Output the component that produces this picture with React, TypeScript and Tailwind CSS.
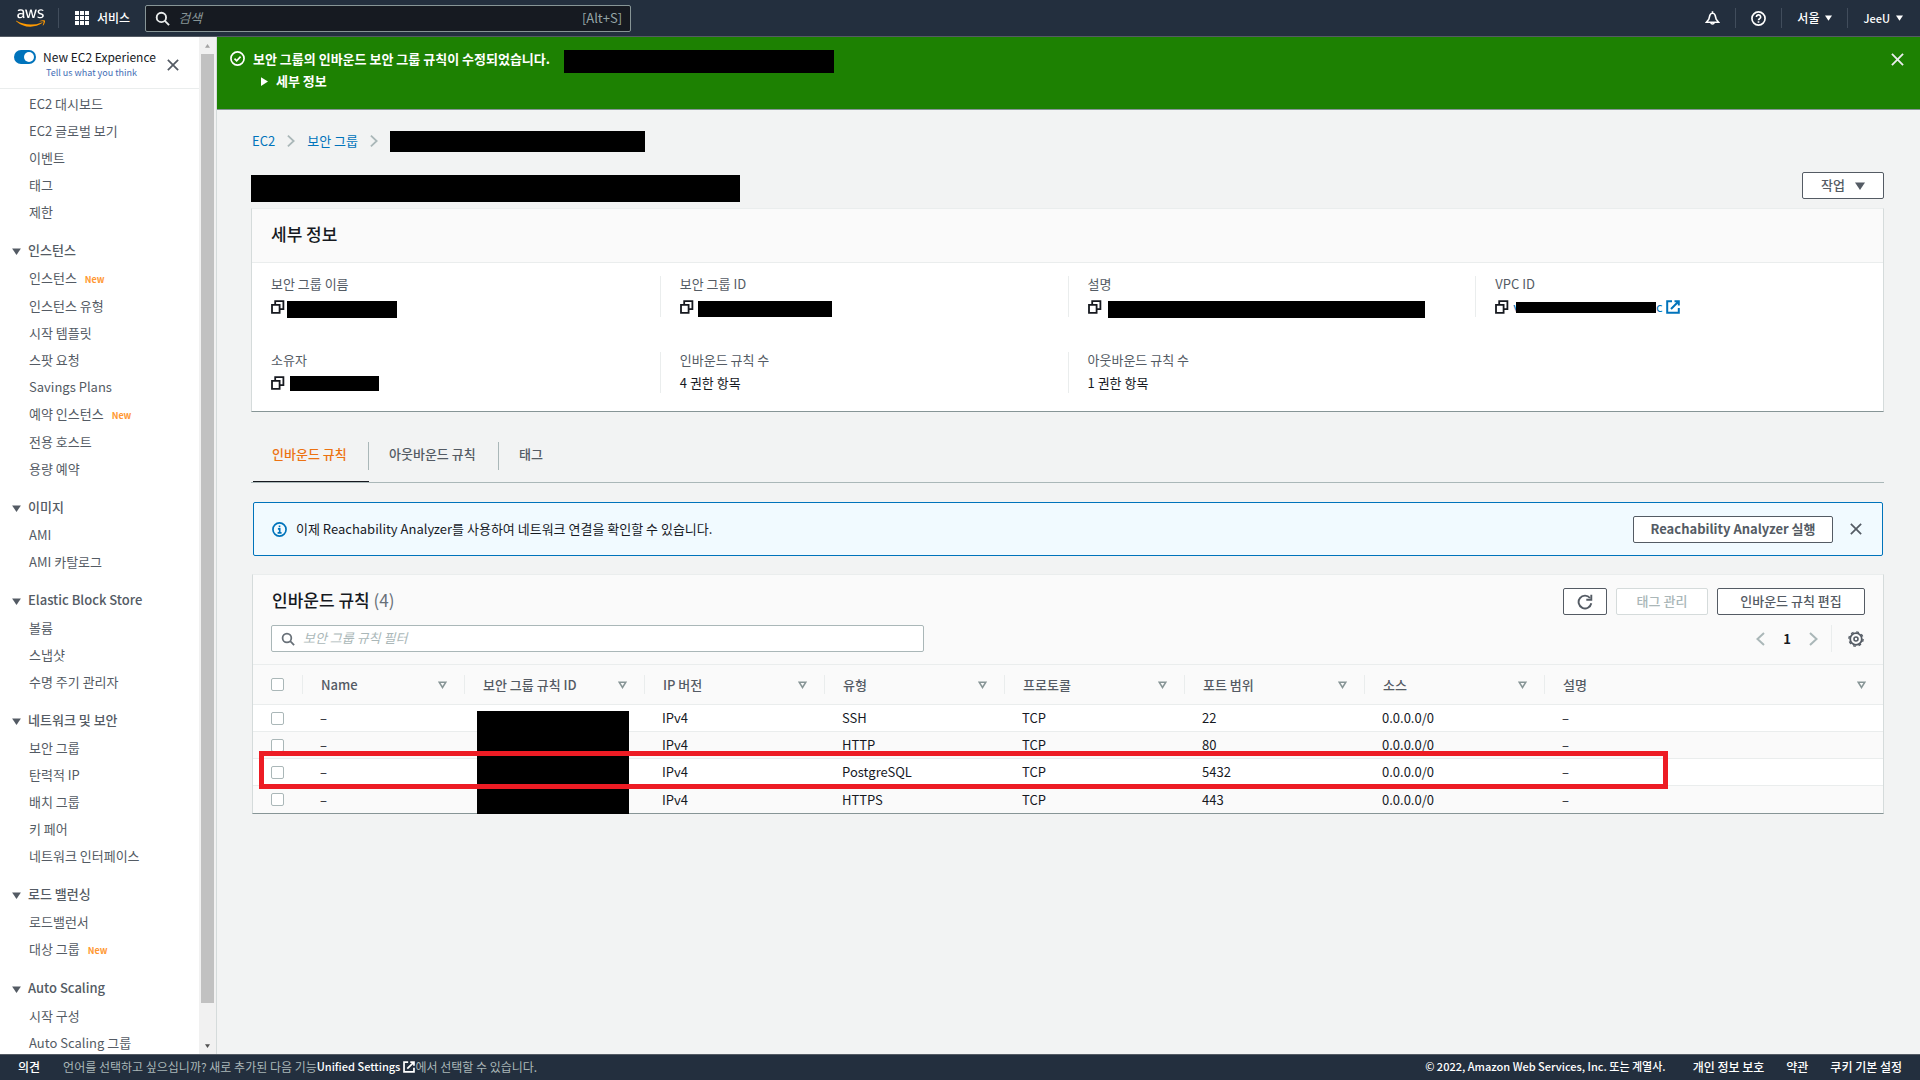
import React from 'react';
import { FaAws } from 'react-icons/fa';

interface NavItem {
  label: string;
  isNew?: boolean;
}

interface NavSection {
  title?: string;
  items: NavItem[];
}

const sections: NavSection[] = [
  {
    items: [
      { label: 'EC2 대시보드' },
      { label: 'EC2 글로벌 보기' },
      { label: '이벤트' },
      { label: '태그' },
      { label: '제한' },
    ],
  },
  {
    title: '인스턴스',
    items: [
      { label: '인스턴스', isNew: true },
      { label: '인스턴스 유형' },
      { label: '시작 템플릿' },
      { label: '스팟 요청' },
      { label: 'Savings Plans' },
      { label: '예약 인스턴스', isNew: true },
      { label: '전용 호스트' },
      { label: '용량 예약' },
    ],
  },
  { title: '이미지', items: [{ label: 'AMI' }, { label: 'AMI 카탈로그' }] },
  {
    title: 'Elastic Block Store',
    items: [{ label: '볼륨' }, { label: '스냅샷' }, { label: '수명 주기 관리자' }],
  },
  {
    title: '네트워크 및 보안',
    items: [
      { label: '보안 그룹' },
      { label: '탄력적 IP' },
      { label: '배치 그룹' },
      { label: '키 페어' },
      { label: '네트워크 인터페이스' },
    ],
  },
  {
    title: '로드 밸런싱',
    items: [{ label: '로드밸런서' }, { label: '대상 그룹', isNew: true }],
  },
  {
    title: 'Auto Scaling',
    items: [{ label: '시작 구성' }, { label: 'Auto Scaling 그룹' }],
  },
];

const columns = ['Name', '보안 그룹 규칙 ID', 'IP 버전', '유형', '프로토콜', '포트 범위', '소스', '설명'];

const rules = [
  { type: 'SSH', port: '22' },
  { type: 'HTTP', port: '80' },
  { type: 'PostgreSQL', port: '5432' },
  { type: 'HTTPS', port: '443' },
];

function Caret({ className }: { className?: string }) {
  return (
    <svg viewBox="0 0 10 8" className={className} fill="currentColor" aria-hidden="true">
      <path d="M0 0.5h10L5 8z" />
    </svg>
  );
}

function CloseIcon({ className }: { className?: string }) {
  return (
    <svg viewBox="0 0 14 14" className={className} fill="none" stroke="currentColor" strokeWidth="2" aria-hidden="true">
      <path d="M1 1l12 12M13 1L1 13" />
    </svg>
  );
}

function SearchIcon({ className }: { className?: string }) {
  return (
    <svg viewBox="0 0 16 16" className={className} fill="none" stroke="currentColor" strokeWidth="2" aria-hidden="true">
      <circle cx="6.8" cy="6.8" r="5" />
      <path d="M10.5 10.5l4.5 4.5" />
    </svg>
  );
}

function CopyIcon() {
  return (
    <svg viewBox="0 0 14 14" className="size-[14px] shrink-0 text-[#16191f]" fill="none" stroke="currentColor" strokeWidth="1.8" aria-hidden="true">
      <path d="M1 4.8h7.6v8H1z" />
      <path d="M4.2 4.5V1.2h8.2v8H9" />
    </svg>
  );
}

function ExternalIcon({ className }: { className?: string }) {
  return (
    <svg viewBox="0 0 14 14" className={className} fill="none" stroke="currentColor" strokeWidth="2" aria-hidden="true">
      <path d="M6 1.2H1.2v11.600h11.600V8" />
      <path d="M8.500 1.200h4.300v4.300M12.500 1.500L5 9" />
    </svg>
  );
}

function Chevron({ left, className }: { left?: boolean; className?: string }) {
  return (
    <svg viewBox="0 0 9 14" className={className} fill="none" stroke="currentColor" strokeWidth="2" aria-hidden="true">
      <path d={left ? 'M8 1L1.5 7 8 13' : 'M1 1l6.5 6L1 13'} />
    </svg>
  );
}

function GearIcon() {
  return (
    <svg viewBox="0 0 16 16" className="size-4" fill="none" stroke="currentColor" aria-hidden="true">
      <circle cx="8" cy="8" r="5.8" strokeWidth="1.8" />
      <circle cx="8" cy="8" r="7.1" strokeWidth="1.4" strokeDasharray="2.79 2.79" />
      <circle cx="8" cy="8" r="2" strokeWidth="1.6" />
    </svg>
  );
}

function TopBar() {
  return (
    <header className="flex h-[37px] shrink-0 items-center border-b border-[#545b64] bg-[#232f3e] text-xs text-white">
      <a href="#home" aria-label="AWS" className="relative ml-4">
        {/* white letters, orange smile */}
        <svg className="absolute size-0" aria-hidden="true">
          <linearGradient id="aws-fill" x1="0" y1="0" x2="0" y2="1">
            <stop offset="0.62" stopColor="#ffffff" />
            <stop offset="0.62" stopColor="#ff9900" />
          </linearGradient>
        </svg>
        <FaAws className="h-6 w-[29px]" fill="url(#aws-fill)" />
      </a>
      <span className="ml-[13px] h-5 w-px bg-[#414d5c]" />
      <button type="button" className="ml-4 flex items-center gap-2 font-medium">
        <svg viewBox="0 0 14 14" className="size-[14px]" fill="currentColor" aria-hidden="true">
          {[0, 5, 10].map((y) => [0, 5, 10].map((x) => <rect key={`${x}-${y}`} x={x} y={y} width="4" height="4" />))}
        </svg>
        서비스
      </button>
      <label className="ml-[15px] flex h-[27px] w-[486px] items-center rounded-xs border border-[#879596] bg-[#161a21] pr-2 pl-[9px] text-[13px] text-[#95a5a6]">
        <SearchIcon className="size-[15px] text-[#eaeded]" />
        <input
          type="text"
          aria-label="검색"
          placeholder="검색"
          className="ml-2 min-w-0 flex-1 bg-transparent outline-none placeholder:text-[#879596] placeholder:italic"
        />
        <span>[Alt+S]</span>
      </label>
      <div className="ml-auto flex items-center font-medium">
        <button type="button" aria-label="알림">
          <svg viewBox="0 0 16 16" className="size-[15px]" fill="none" stroke="currentColor" strokeWidth="1.7" aria-hidden="true">
            <path d="M1.5 12h13l-2.6-3.3L10.8 4.5a2.9 2.9 0 0 0-5.6 0L4.100 8.700z" />
            <path d="M6.200 12.500a1.900 1.900 0 0 0 3.600 0M8 2V0.300" />
          </svg>
        </button>
        <span className="mx-[15px] h-5 w-px bg-[#414d5c]" />
        <button type="button" aria-label="도움말">
          <svg viewBox="0 0 16 16" className="size-[15px]" fill="none" stroke="currentColor" strokeWidth="1.8" aria-hidden="true">
            <circle cx="8" cy="8" r="7" />
            <path d="M5.700 6.400a2.300 2.300 0 1 1 3.400 2c-.8.400-1.100.700-1.100 1.400M8 10.900v1.600" />
          </svg>
        </button>
        <span className="mx-[15px] h-5 w-px bg-[#414d5c]" />
        <button type="button" className="flex items-center gap-[6px]">
          서울 <Caret className="h-[6px] w-[7px]" />
        </button>
        <span className="mx-[15px] h-5 w-px bg-[#414d5c]" />
        <button type="button" className="mr-[17px] flex items-center gap-[6px] text-[11px]">
          JeeU <Caret className="h-[6px] w-[7px]" />
        </button>
      </div>
    </header>
  );
}

function Sidebar() {
  return (
    <aside className="flex w-[217px] shrink-0 border-r border-[#d5dbdb] bg-white text-[#545b64]">
      <div className="min-w-0 flex-1 overflow-hidden">
        <div className="flex h-[52px] items-start border-b border-[#eaeded] pt-[10px] pl-[14px]">
          <button type="button" role="switch" aria-checked="true" aria-label="New EC2 Experience" className="mt-[3px] flex h-[14px] w-[22px] shrink-0 justify-end rounded-full bg-[#0073bb] p-[2px]">
            <span className="size-[10px] rounded-full bg-white" />
          </button>
          <div className="ml-[7px]">
            <p className="text-xs leading-5 text-[#16191f]">New EC2 Experience</p>
            <a href="#feedback" className="block pl-[3px] text-[9px] leading-3 text-[#3f6db5]">
              Tell us what you think
            </a>
          </div>
          <button type="button" aria-label="닫기" className="mt-3 ml-[11px]">
            <CloseIcon className="size-3" />
          </button>
        </div>
        <nav className="pt-px text-[13px]">
          {sections.map((section, i) => (
            <div key={i} className={section.title ? 'mt-[10px]' : ''}>
              {section.title && (
                <button type="button" className="flex h-[29px] w-full items-center gap-[7px] pl-3 font-medium">
                  <Caret className="mt-1 h-[7px] w-[9px]" />
                  {section.title}
                </button>
              )}
              <ul>
                {section.items.map((item) => (
                  <li key={item.label} className={item.isNew ? 'flex h-7 items-center pl-[29px]' : 'flex h-[27px] items-center pl-[29px]'}>
                    <a href="#nav">{item.label}</a>
                    {item.isNew && <span className="mt-1 ml-2 text-[9px] font-bold text-[#ff9933]">New</span>}
                  </li>
                ))}
              </ul>
            </div>
          ))}
        </nav>
      </div>
      <div className="flex w-[17px] shrink-0 flex-col items-center bg-[#f1f1f1]" aria-hidden="true">
        <div className="flex h-[17px] items-center">
          <Caret className="h-1 w-[7px] rotate-180 text-[#a3a3a3]" />
        </div>
        <div className="w-[13px] grow-[949] bg-[#c1c1c1]" />
        <div className="grow-[34]" />
        <div className="flex h-[17px] items-center">
          <Caret className="h-1 w-[7px] text-[#505050]" />
        </div>
      </div>
    </aside>
  );
}

function Banner() {
  return (
    <div className="flex h-[73px] shrink-0 items-start border-b border-[#879596] bg-[#1d8102] pt-[10px] pr-4 pl-[13px] text-[13px] font-bold text-white">
      <svg viewBox="0 0 16 16" className="mt-1 size-[15px]" fill="none" stroke="currentColor" strokeWidth="1.8" aria-hidden="true">
        <circle cx="8" cy="8" r="7" />
        <path d="M4.800 8.200l2.300 2.300 4.200-4.500" />
      </svg>
      <div className="ml-2">
        <div className="flex h-[23px] items-center">
          보안 그룹의 인바운드 보안 그룹 규칙이 수정되었습니다.
          <span className="mt-[5px] ml-[14px] h-[23px] w-[270px] bg-black" />
        </div>
        <button type="button" className="flex h-[22px] items-center gap-2 pl-2">
          <svg viewBox="0 0 8 10" className="h-[9px] w-[7px]" fill="currentColor" aria-hidden="true">
            <path d="M0 0l8 5-8 5z" />
          </svg>
          세부 정보
        </button>
      </div>
      <button type="button" aria-label="알림 닫기" className="mt-[6px] ml-auto">
        <CloseIcon className="size-[13px] text-[#eaeded]" />
      </button>
    </div>
  );
}

function Detail({ label, first, children }: { label: string; first?: boolean; children: React.ReactNode }) {
  return (
    <div className={first ? 'h-[41px] pl-[19px]' : 'h-[41px] border-l border-[#eaeded] pl-[19px]'}>
      <dt className="text-[13px] leading-4 text-[#545b64]">{label}</dt>
      <dd className="mt-1 flex h-[22px] items-center text-[13px] text-[#16191f]">{children}</dd>
    </div>
  );
}

function DetailsPanel() {
  return (
    <section className="mt-[6px] border border-x-[#d5dbdb] border-t-[#eaeded] border-b-[#879596] bg-white">
      <h2 className="flex h-[54px] items-center border-b border-[#eaeded] bg-[#fafafa] pb-1 pl-[19px] text-[17px] font-medium text-[#16191f]">세부 정보</h2>
      <dl className="grid grid-cols-4 gap-y-[35px] pt-[13px] pb-[18px]">
        <Detail label="보안 그룹 이름" first>
          <CopyIcon />
          <span className="mt-1 ml-[2px] h-[17px] w-[110px] bg-black" />
        </Detail>
        <Detail label="보안 그룹 ID">
          <CopyIcon />
          <span className="mt-1 ml-1 h-4 w-[134px] bg-black" />
        </Detail>
        <Detail label="설명">
          <CopyIcon />
          <span className="mt-1 ml-[6px] h-[17px] w-[317px] bg-black" />
        </Detail>
        <Detail label="VPC ID">
          <CopyIcon />
          <a href="#vpc" className="ml-1 flex items-center text-[#0073bb]">
            <span>v</span>
            <span className="-ml-1 h-[11px] w-[140px] bg-black" />
            <span>c</span>
            <ExternalIcon className="ml-[3px] size-[14px]" />
          </a>
        </Detail>
        <Detail label="소유자" first>
          <CopyIcon />
          <span className="ml-[5px] h-[15px] w-[89px] bg-black" />
        </Detail>
        <Detail label="인바운드 규칙 수">4 권한 항목</Detail>
        <Detail label="아웃바운드 규칙 수">1 권한 항목</Detail>
      </dl>
    </section>
  );
}

function Tabs() {
  return (
    <div role="tablist" className="mt-[30px] flex h-[41px] items-start border-b border-[#aab7b8] pl-[2px] text-[13px] font-medium text-[#545b64]">
      <button type="button" role="tab" aria-selected="true" className="flex h-10 w-[116px] items-start border-b border-[#16191f] text-[#ec7211]">
        <span className="flex h-7 w-full items-center border-r border-[#aab7b8] pb-1 pl-[19px]">인바운드 규칙</span>
      </button>
      <button type="button" role="tab" aria-selected="false" className="flex h-7 w-[130px] items-center border-r border-[#aab7b8] pb-1 pl-5">
        아웃바운드 규칙
      </button>
      <button type="button" role="tab" aria-selected="false" className="flex h-7 items-center pb-1 pl-5">
        태그
      </button>
    </div>
  );
}

function RulesPanel() {
  return (
    <section className="mt-[18px] ml-px border border-x-[#d5dbdb] border-t-[#eaeded] border-b-[#879596] bg-[#fafafa] text-[13px]">
      <div className="flex items-center gap-[9px] pt-[13px] pr-[18px] pl-[19px]">
        <h2 className="mr-auto h-[27px] text-[17px] leading-6 font-medium text-[#16191f]">
          인바운드 규칙 <span className="font-normal text-[#687078]">(4)</span>
        </h2>
        <button type="button" aria-label="새로 고침" className="flex h-[27px] w-11 items-center justify-center rounded-xs border border-[#545b64] bg-white text-[#545b64]">
          <svg viewBox="0 0 16 16" className="size-4" fill="none" stroke="currentColor" strokeWidth="1.9" aria-hidden="true">
            <path d="M14.300 9.300A6.400 6.400 0 1 1 13 4" />
            <path d="M14.300 0.800v5H9.300" />
          </svg>
        </button>
        <button type="button" disabled className="h-[27px] w-[92px] rounded-xs border border-[#d5dbdb] bg-white pb-[2px] font-medium text-[#aab7b8]">
          태그 관리
        </button>
        <button type="button" className="h-[27px] w-[148px] rounded-xs border border-[#545b64] bg-white pb-[2px] font-medium text-[#545b64]">
          인바운드 규칙 편집
        </button>
      </div>
      <div className="flex items-center pt-[10px] pr-[19px] pb-3 pl-[18px]">
        <label className="flex h-[27px] w-[41%] items-center rounded-xs border border-[#aab7b8] bg-white px-[9px]">
          <SearchIcon className="size-[14px] text-[#687078]" />
          <input
            type="text"
            aria-label="보안 그룹 규칙 필터"
            placeholder="보안 그룹 규칙 필터"
            className="mb-[2px] ml-2 min-w-0 flex-1 bg-transparent outline-none placeholder:text-[#aab7b8] placeholder:italic"
          />
        </label>
        <div className="ml-auto flex items-center text-[#aab7b8]">
          <button type="button" aria-label="이전 페이지">
            <Chevron left className="h-[14px] w-[9px]" />
          </button>
          <span className="mx-[18px] font-bold text-[#16191f]">1</span>
          <button type="button" aria-label="다음 페이지">
            <Chevron className="h-[14px] w-[9px]" />
          </button>
          <span className="mr-4 ml-[13px] h-[27px] w-px bg-[#eaeded]" />
          <button type="button" aria-label="기본 설정" className="text-[#545b64]">
            <GearIcon />
          </button>
        </div>
      </div>
      <div className="relative">
        <table className="w-full table-fixed text-left">
          <colgroup>
            <col className="w-[49px]" />
            <col className="w-[162px]" />
            <col className="w-[180px]" />
            <col className="w-[180px]" />
            <col className="w-[180px]" />
            <col className="w-[180px]" />
            <col className="w-[180px]" />
            <col className="w-[180px]" />
            <col />
          </colgroup>
          <thead>
            <tr className="h-10 border-y border-[#eaeded] text-[#545b64]">
              <th className="pl-[18px]">
                <input type="checkbox" aria-label="모두 선택" className="block size-[13px] appearance-none rounded-xs border border-[#aab7b8] bg-white" />
              </th>
              {columns.map((column) => (
                <th key={column} className="font-medium">
                  <div className="flex h-[19px] items-center justify-between border-l border-[#eaeded] pr-[17px] pl-[18px]">
                    {column}
                    <svg viewBox="0 0 10 9" className="h-2 w-[9px] text-[#879596]" fill="none" stroke="currentColor" strokeWidth="1.7" aria-hidden="true">
                      <path d="M1.300 1.300h7.400L5 7.300z" />
                    </svg>
                  </div>
                </th>
              ))}
            </tr>
          </thead>
          <tbody className="text-[#16191f]">
            {rules.map((rule) => (
              <tr key={rule.type} className="h-[27px] border-b border-[#eaeded] odd:bg-white last:border-b-0">
                <td className="pl-[18px]">
                  <input type="checkbox" aria-label={rule.type} className="block size-[13px] appearance-none rounded-xs border border-[#aab7b8] bg-white" />
                </td>
                <td className="pl-[18px]">–</td>
                <td />
                <td className="pl-[18px]">IPv4</td>
                <td className="pl-[18px]">{rule.type}</td>
                <td className="pl-[18px]">TCP</td>
                <td className="pl-[18px]">{rule.port}</td>
                <td className="pl-[18px]">0.0.0.0/0</td>
                <td className="pl-[18px]">–</td>
              </tr>
            ))}
          </tbody>
        </table>
        {/* hidden rule ids and the highlighted row */}
        <div className="absolute top-[47px] left-[224px] h-[103px] w-[152px] bg-black" />
        <div className="absolute top-[87px] right-[215px] left-[6px] h-[38px] border-[5px] border-[#ed1c24]" />
      </div>
    </section>
  );
}

export default function App() {
  return (
    <div className="flex h-screen flex-col bg-[#f2f3f3] font-['Noto_Sans_CJK_KR',sans-serif]">
      <TopBar />
      <div className="flex min-h-0 flex-1">
        <Sidebar />
        <main className="flex min-w-0 flex-1 flex-col overflow-hidden">
          <Banner />
          <div className="pr-9 pl-[34px]">
            <nav className="mt-5 flex h-[22px] items-center gap-3 pl-px text-[13px] text-[#0073bb]">
              <a href="#ec2">EC2</a>
              <Chevron className="h-[14px] w-2 text-[#aab7b8]" />
              <a href="#groups">보안 그룹</a>
              <Chevron className="h-[14px] w-2 text-[#aab7b8]" />
              <span className="h-[21px] w-[255px] bg-black" />
            </nav>
            <div className="mt-5 flex items-start justify-between">
              <span className="mt-[3px] h-[27px] w-[489px] bg-black" />
              <button type="button" className="flex h-[27px] w-[82px] items-center justify-center gap-[10px] rounded-xs border border-[#545b64] bg-white pb-[2px] text-[13px] font-medium text-[#545b64]">
                작업 <Caret className="mt-[2px] h-2 w-[10px]" />
              </button>
            </div>
            <DetailsPanel />
            <Tabs />
            <div className="mt-[19px] mr-px ml-[2px] flex h-[54px] items-center rounded-xs border border-[#0073bb] bg-[#f1faff] pr-5 pl-[18px] text-[13px] text-[#16191f]">
              <svg viewBox="0 0 16 16" className="size-[15px] text-[#0073bb]" fill="none" stroke="currentColor" strokeWidth="1.8" aria-hidden="true">
                <circle cx="8" cy="8" r="7" />
                <path d="M6.300 7.300H8.200v4M6 11.600h4.200M7.200 4.600h1.700" />
              </svg>
              <p className="ml-[9px]">이제 Reachability Analyzer를 사용하여 네트워크 연결을 확인할 수 있습니다.</p>
              <button type="button" className="ml-auto h-[27px] w-[200px] rounded-xs border border-[#545b64] bg-white font-bold text-[#545b64]">
                Reachability Analyzer 실행
              </button>
              <button type="button" aria-label="안내 닫기" className="ml-[17px] text-[#545b64]">
                <CloseIcon className="size-3" />
              </button>
            </div>
            <RulesPanel />
          </div>
        </main>
      </div>
      <footer className="flex h-[26px] shrink-0 items-center border-t border-[#545b64] bg-[#232f3e] px-[18px] pb-[2px] text-xs font-medium text-white">
        <a href="#feedback">의견</a>
        <p className="ml-[23px] flex items-center font-normal text-[#aab7b8]">
          언어를 선택하고 싶으십니까? 새로 추가된 다음 기능
          <a href="#settings" className="flex items-center gap-[3px] text-[11px] font-medium text-white">
            Unified Settings
            <ExternalIcon className="size-3" />
          </a>
          에서 선택할 수 있습니다.
        </p>
        <span className="mr-[27px] ml-auto text-[11px]">© 2022, Amazon Web Services, Inc. 또는 계열사.</span>
        <a href="#privacy" className="mr-[22px]">
          개인 정보 보호
        </a>
        <a href="#terms" className="mr-[22px]">
          약관
        </a>
        <a href="#cookies">쿠키 기본 설정</a>
      </footer>
    </div>
  );
}
